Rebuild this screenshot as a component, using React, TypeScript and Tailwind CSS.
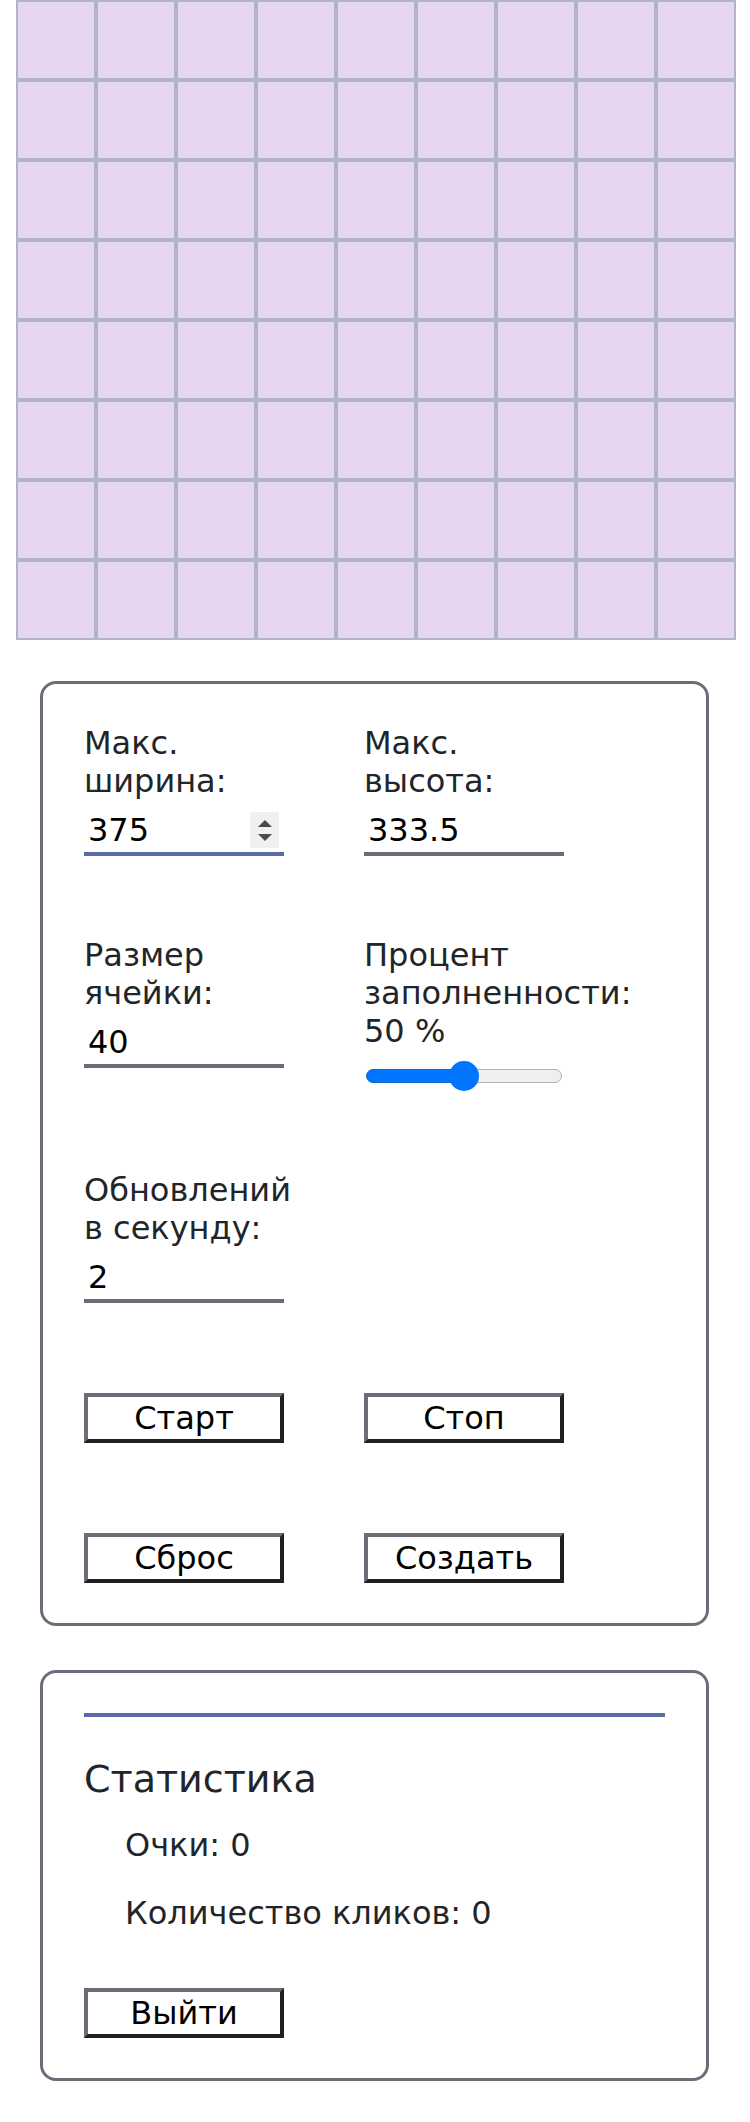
import React from "react";

const font = { fontFamily: '"DejaVu Sans", "Noto Sans", sans-serif' };

function Spinner() {
  return (
    <div className="absolute right-[5px] top-[12px] w-[29px] h-[36px] bg-[#f0f0f0] flex flex-col items-center justify-center gap-[7px]">
      <svg width="14" height="7" viewBox="0 0 14 7"><polygon points="7,0 14,7 0,7" fill="#4a4a4a" /></svg>
      <svg width="14" height="7" viewBox="0 0 14 7"><polygon points="0,0 14,0 7,7" fill="#4a4a4a" /></svg>
    </div>
  );
}

function Field({ label, value, active = false, spinner = false }: { label: React.ReactNode; value: string; active?: boolean; spinner?: boolean }) {
  return (
    <div className="flex flex-col">
      <div className="text-[32px] leading-[38px] text-[#212529]">{label}</div>
      <div className="relative w-[200px] h-[56px]">
        <input
          readOnly
          value={value}
          style={font}
          className={
            "block w-[200px] h-[56px] pl-[4px] pt-[8px] text-[32px] text-black bg-white outline-none border-b-4 " +
            (active ? "border-[#5a6aa6]" : "border-[#6c6d78]")
          }
        />
        {spinner && <Spinner />}
      </div>
    </div>
  );
}

function Btn({ children }: { children: React.ReactNode }) {
  return (
    <button
      style={font}
      className="w-[200px] h-[50px] bg-white text-black text-[32px] leading-[38px] border-4 border-t-[#6c6d78] border-l-[#6c6d78] border-b-[#1f1f1f] border-r-[#1f1f1f] flex items-center justify-center"
    >
      {children}
    </button>
  );
}

function Slider() {
  return (
    <div className="relative w-[200px] h-[30px] mt-[11px]">
      <div className="absolute left-[2px] top-[8px] w-[100px] h-[14px] rounded-l-full bg-[#0075ff] border border-[#1767c4]" />
      <div className="absolute left-[100px] top-[8px] w-[98px] h-[14px] rounded-r-full bg-[#efefef] border border-[#b2b2b2]" />
      <div className="absolute left-[85px] top-0 w-[30px] h-[30px] rounded-full bg-[#0075ff]" />
    </div>
  );
}

export default function App() {
  const cells = Array.from({ length: 72 });
  return (
    <div style={font} className="w-[750px] bg-white pb-[41px]">
      <div className="ml-[16px] w-[720px] grid grid-cols-[repeat(9,80px)]">
        {cells.map((_, i) => (
          <div key={i} className="w-[80px] h-[80px] border-2 border-[#b4b4c9] bg-[#e7d6ef]" />
        ))}
      </div>

      <div className="ml-[40px] mr-[41px] mt-[41px] border-[3px] border-[#6c6d78] rounded-[16px] pl-[41px] pr-[40px] py-[40px]">
        <div className="grid grid-cols-[200px_200px] gap-x-[80px] gap-y-[80px] items-start">
          <Field label={<>Макс.<br />ширина:</>} value="375" active spinner />
          <Field label={<>Макс.<br />высота:</>} value="333.5" />
          <Field label={<>Размер<br />ячейки:</>} value="40" />
          <div className="flex flex-col">
            <div className="text-[32px] leading-[38px] text-[#212529] whitespace-nowrap">
              Процент<br />заполненности:<br />50 %
            </div>
            <Slider />
          </div>
          <Field label={<>Обновлений<br />в секунду:</>} value="2" />
        </div>
        <div className="grid grid-cols-[200px_200px] gap-x-[80px] gap-y-[90px] mt-[90px]">
          <Btn>Старт</Btn>
          <Btn>Стоп</Btn>
          <Btn>Сброс</Btn>
          <Btn>Создать</Btn>
        </div>
      </div>

      <div className="ml-[40px] mr-[41px] mt-[44px] border-[3px] border-[#6c6d78] rounded-[16px] pl-[41px] pr-[40px] py-[40px]">
        <div className="h-[4px] w-[581px] bg-[#5a6aa6]" />
        <div className="mt-[39px] text-[38px] leading-[46px] text-[#212529]">Статистика</div>
        <div className="mt-[24px] pl-[41px] text-[32px] leading-[38px] text-[#212529]">Очки: 0</div>
        <div className="mt-[30px] pl-[41px] text-[32px] leading-[38px] text-[#212529]">Количество кликов: 0</div>
        <div className="mt-[56px]">
          <Btn>Выйти</Btn>
        </div>
      </div>
    </div>
  );
}
